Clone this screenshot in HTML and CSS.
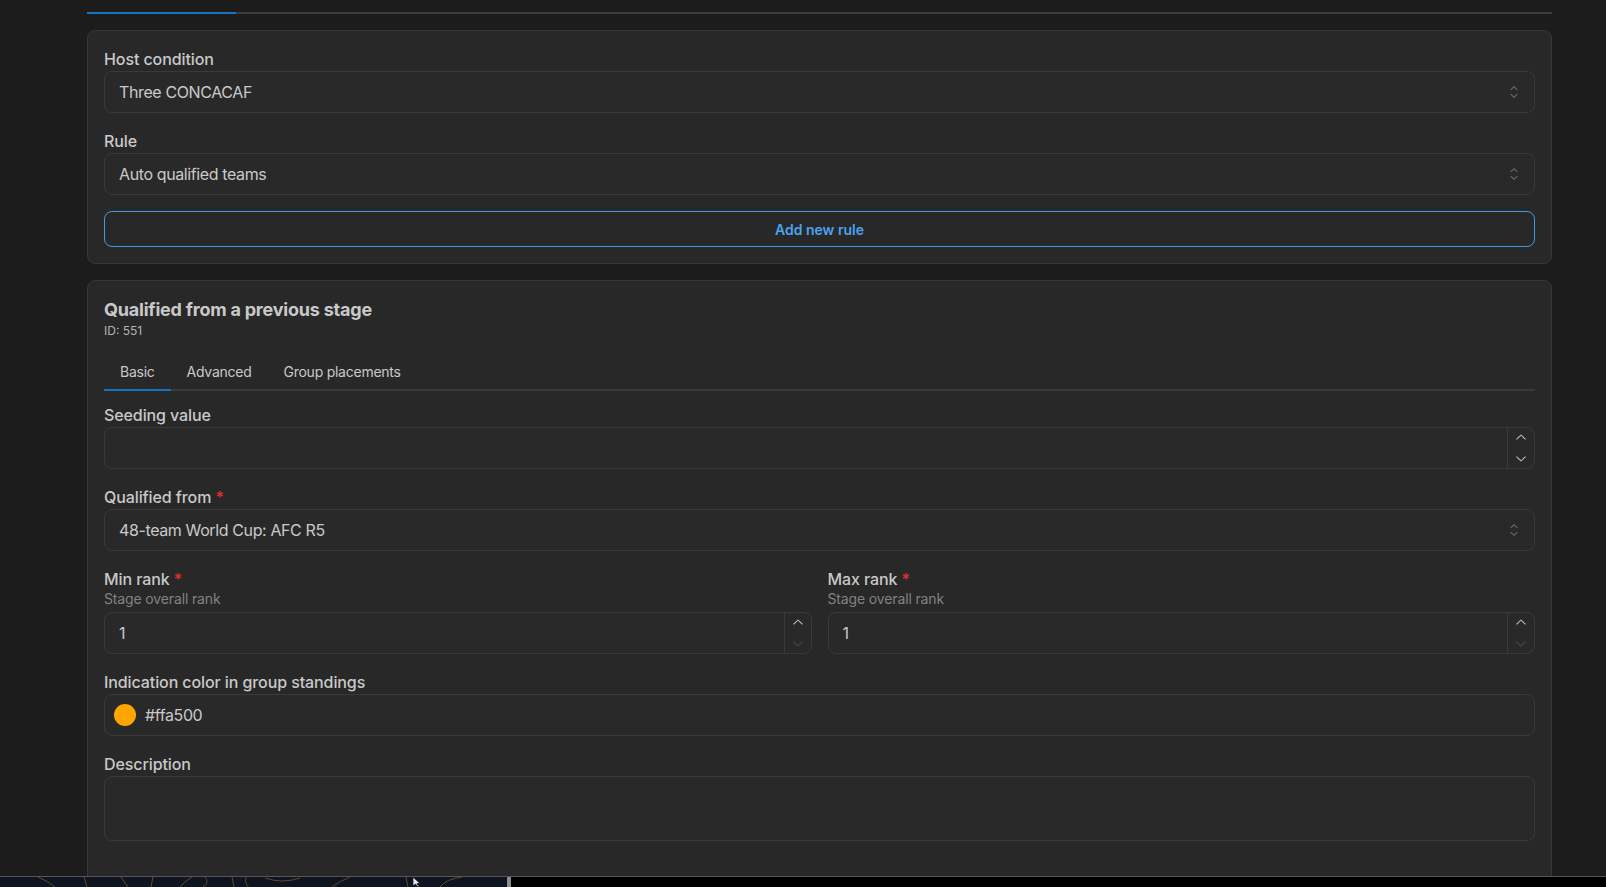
FILE: index.html
```html
<!DOCTYPE html>
<html lang="en">
<head>
	<meta charset="UTF-8">
	<title>Qualification rules</title>
	<link rel="stylesheet" href="styles.css">
</head>
<body>

	<div class="window">
		<div class="page">

			<div class="top-tabs">
				<div class="top-tab active"></div>
			</div>

			<section class="card">
				<div class="field">
					<label class="label">Host condition</label>
					<div class="input select">
						<span class="value">Three CONCACAF</span>
						<svg class="caret" viewBox="0 0 15 15"><path fill="currentColor" d="M4.93 5.43a.45.45 0 0 0 .64.64L7.5 4.14l1.93 1.93a.45.45 0 0 0 .64-.64L7.82 3.18a.45.45 0 0 0-.64 0L4.93 5.43Zm5.14 4.14a.45.45 0 0 0-.64-.64L7.5 10.86 5.57 8.93a.45.45 0 0 0-.64.64l2.25 2.25a.45.45 0 0 0 .64 0l2.25-2.25Z"/></svg>
					</div>
				</div>
				<div class="field">
					<label class="label">Rule</label>
					<div class="input select">
						<span class="value">Auto qualified teams</span>
						<svg class="caret" viewBox="0 0 15 15"><path fill="currentColor" d="M4.93 5.43a.45.45 0 0 0 .64.64L7.5 4.14l1.93 1.93a.45.45 0 0 0 .64-.64L7.82 3.18a.45.45 0 0 0-.64 0L4.93 5.43Zm5.14 4.14a.45.45 0 0 0-.64-.64L7.5 10.86 5.57 8.93a.45.45 0 0 0-.64.64l2.25 2.25a.45.45 0 0 0 .64 0l2.25-2.25Z"/></svg>
					</div>
				</div>
				<button class="btn-outline">Add new rule</button>
			</section>

			<section class="card card-stage">
				<h2 class="card-title">Qualified from a previous stage</h2>
				<div class="card-id">ID: 551</div>

				<div class="tabs">
					<button class="tab active">Basic</button>
					<button class="tab">Advanced</button>
					<button class="tab">Group placements</button>
				</div>

				<div class="panel">
					<div class="field">
						<label class="label">Seeding value</label>
						<div class="input number">
							<span class="value"></span>
							<div class="controls">
								<div class="step"><svg class="chev up" viewBox="0 0 15 15"><path fill="currentColor" d="M3.14 6.16a.5.5 0 0 1 .7-.02L7.5 9.56l3.66-3.43a.5.5 0 0 1 .68.73l-4 3.75a.5.5 0 0 1-.68 0l-4-3.75a.5.5 0 0 1-.02-.7Z"/></svg></div>
								<div class="step"><svg class="chev" viewBox="0 0 15 15"><path fill="currentColor" d="M3.14 6.16a.5.5 0 0 1 .7-.02L7.5 9.56l3.66-3.43a.5.5 0 0 1 .68.73l-4 3.75a.5.5 0 0 1-.68 0l-4-3.75a.5.5 0 0 1-.02-.7Z"/></svg></div>
							</div>
						</div>
					</div>

					<div class="field">
						<label class="label">Qualified from <span class="req">*</span></label>
						<div class="input select">
							<span class="value">48-team World Cup: AFC R5</span>
							<svg class="caret" viewBox="0 0 15 15"><path fill="currentColor" d="M4.93 5.43a.45.45 0 0 0 .64.64L7.5 4.14l1.93 1.93a.45.45 0 0 0 .64-.64L7.82 3.18a.45.45 0 0 0-.64 0L4.93 5.43Zm5.14 4.14a.45.45 0 0 0-.64-.64L7.5 10.86 5.57 8.93a.45.45 0 0 0-.64.64l2.25 2.25a.45.45 0 0 0 .64 0l2.25-2.25Z"/></svg>
						</div>
					</div>

					<div class="row">
						<div class="field">
							<label class="label">Min rank <span class="req">*</span></label>
							<div class="description">Stage overall rank</div>
							<div class="input number">
								<span class="value">1</span>
								<div class="controls">
									<div class="step"><svg class="chev up" viewBox="0 0 15 15"><path fill="currentColor" d="M3.14 6.16a.5.5 0 0 1 .7-.02L7.5 9.56l3.66-3.43a.5.5 0 0 1 .68.73l-4 3.75a.5.5 0 0 1-.68 0l-4-3.75a.5.5 0 0 1-.02-.7Z"/></svg></div>
									<div class="step off"><svg class="chev" viewBox="0 0 15 15"><path fill="currentColor" d="M3.14 6.16a.5.5 0 0 1 .7-.02L7.5 9.56l3.66-3.43a.5.5 0 0 1 .68.73l-4 3.75a.5.5 0 0 1-.68 0l-4-3.75a.5.5 0 0 1-.02-.7Z"/></svg></div>
								</div>
							</div>
						</div>
						<div class="field">
							<label class="label">Max rank <span class="req">*</span></label>
							<div class="description">Stage overall rank</div>
							<div class="input number">
								<span class="value">1</span>
								<div class="controls">
									<div class="step"><svg class="chev up" viewBox="0 0 15 15"><path fill="currentColor" d="M3.14 6.16a.5.5 0 0 1 .7-.02L7.5 9.56l3.66-3.43a.5.5 0 0 1 .68.73l-4 3.75a.5.5 0 0 1-.68 0l-4-3.75a.5.5 0 0 1-.02-.7Z"/></svg></div>
									<div class="step off"><svg class="chev" viewBox="0 0 15 15"><path fill="currentColor" d="M3.14 6.16a.5.5 0 0 1 .7-.02L7.5 9.56l3.66-3.43a.5.5 0 0 1 .68.73l-4 3.75a.5.5 0 0 1-.68 0l-4-3.75a.5.5 0 0 1-.02-.7Z"/></svg></div>
								</div>
							</div>
						</div>
					</div>

					<div class="field">
						<label class="label">Indication color in group standings</label>
						<div class="input color-input">
							<span class="swatch"></span>
							<span class="value">#ffa500</span>
						</div>
					</div>

					<div class="field">
						<label class="label">Description</label>
						<div class="input textarea"></div>
					</div>
				</div>
			</section>

		</div>
	</div>

	<div class="desktop">
		<svg class="wallpaper" width="507" height="10" viewBox="0 0 507 10">
			<rect width="507" height="10" fill="#0e1521"/>
			<g fill="none" stroke="#5e4b2c" stroke-width="1">
				<path d="M38 0 Q48 4 55 10"/>
				<path d="M84 0 L87 10"/>
				<path d="M121 0 Q124 5 128 10"/>
				<path d="M153 0 L151 10"/>
				<path d="M180 10 Q186 3 192 0"/>
				<path d="M205 0 Q210 6 203 10"/>
				<path d="M232 0 L234 10"/>
				<path d="M246 0 Q244 5 248 10"/>
				<path d="M265 1 Q282 7 300 1"/>
				<path d="M332 10 Q340 4 350 0"/>
				<path d="M406 0 L408 10"/>
				<path d="M440 10 Q446 2 462 0"/>
			</g>
			<path d="M413 0 L413 9 L415.5 7 L418 10 L419 9.5 L417 6.5 L420 6.5 Z" fill="#e8e8e8" stroke="#111" stroke-width="0.7"/>
		</svg>
		<div class="dock-edge"></div>
	</div>

</body>
</html>
```
FILE: styles.css
```css
body {
	margin: 0;
	background: #1c1c1c;
	font-family: Inter, "Noto Sans", sans-serif;
	color: #c9c9c9;
	letter-spacing: -0.024em;
}

.window {
	height: 876px;
	overflow: hidden;
}
.page {
	width: 1465px;
	margin-left: 87px;
}

/* tab bar above, scrolled out of view */
.top-tabs {
	height: 12px;
	border-bottom: 2px solid #3b3b3b;
	margin-bottom: 16px;
	display: flex;
	align-items: flex-start;
}
.top-tab {
	width: 149px;
	height: 12px;
	border-bottom: 2px solid #1971c2;
}

.card {
	background: #282828;
	border: 1px solid #373737;
	border-radius: 8px;
	padding: 16px;
	margin-bottom: 16px;
	display: flex;
	flex-direction: column;
	gap: 16px;
}
.card-stage {
	gap: 0;
	padding-bottom: 60px;
}
.card-title {
	margin: 0;
	font-size: 18px;
	line-height: 25px;
	font-weight: 700;
	letter-spacing: -0.012em;
}
.card-id {
	font-size: 12px;
	line-height: 18px;
	color: #b4b4b4;
	letter-spacing: 0;
}

.tabs {
	margin-top: 15px;
	display: flex;
	border-bottom: 2px solid #3a3a3a;
}
.tab {
	padding: 10px 16px;
	font-family: inherit;
	font-size: 14px;
	line-height: 14px;
	letter-spacing: -0.018em;
	color: #c9c9c9;
	background: none;
	border: 0;
	border-bottom: 2px solid transparent;
	margin-bottom: -2px;
}
.tab.active {
	border-bottom-color: #1971c2;
}

.panel {
	padding-top: 12px;
	display: flex;
	flex-direction: column;
	gap: 16px;
}

.field {
	display: flex;
	flex-direction: column;
}
.label {
	display: block;
	font-size: 16px;
	line-height: 24px;
	font-weight: 500;
	letter-spacing: -0.006em;
}
.req {
	color: #e03131;
}
.description {
	font-size: 14px;
	line-height: 16px;
	color: #828282;
	margin-bottom: 5px;
	letter-spacing: -0.01em;
}
.row {
	display: grid;
	grid-template-columns: 1fr 1fr;
	gap: 16px;
}

.input {
	box-sizing: border-box;
	height: 42px;
	background: #292929;
	border: 1px solid #3a3a3a;
	border-radius: 8px;
	display: flex;
	align-items: center;
	padding-left: 14px;
	font-size: 16px;
	color: #c9c9c9;
}
.value {
	flex: 1;
}
.caret {
	width: 20px;
	height: 20px;
	color: #666;
	margin-right: 10px;
}

.number {
	padding-right: 0;
}
.controls {
	align-self: stretch;
	width: 26px;
	border-left: 1px solid #3a3a3a;
	display: flex;
	flex-direction: column;
}
.step {
	flex: 1;
	display: flex;
	align-items: center;
	justify-content: center;
	color: #c2c2c2;
}
.step.off {
	color: #4a4a4a;
}
.chev {
	width: 16px;
	height: 16px;
}
.chev.up {
	transform: rotate(180deg);
}

.color-input {
	padding-left: 9px;
	gap: 9px;
}
.swatch {
	width: 22px;
	height: 22px;
	border-radius: 50%;
	background: #ffa500;
}

.textarea {
	height: 65px;
}

.btn-outline {
	height: 36px;
	border: 1px solid #4299e6;
	border-radius: 8px;
	background: transparent;
	color: #4ba3f0;
	font-family: inherit;
	font-size: 14px;
	font-weight: 600;
}

/* desktop peeking under the window */
.desktop {
	height: 10px;
	border-top: 1px solid #555;
	background: #000;
	display: flex;
}
.wallpaper {
	display: block;
}
.dock-edge {
	width: 4px;
	background: #8c8c8c;
}
```
